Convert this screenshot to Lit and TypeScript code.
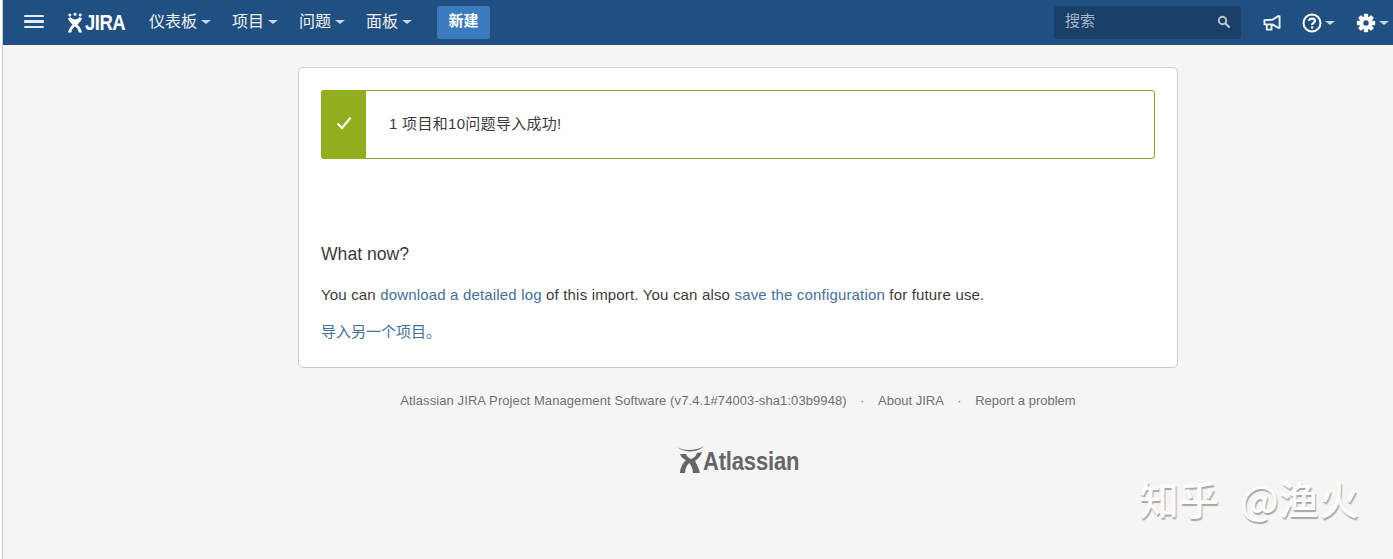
import { LitElement, html, css, svg } from "lit";
import { customElement } from "lit/decorators.js";

const caret = html`<span class="caret"></span>`;

@customElement("app-root")
export class AppRoot extends LitElement {
  static styles = css`
    :host { display: block; position: relative; width: 1393px; height: 559px; overflow: hidden; background: #fff; font-family: "Liberation Sans", "Noto Sans CJK SC", sans-serif; font-size: 14px; color: #3b3b3b; }
    .page { margin-left: 2px; height: 559px; border-left: 1px solid #ccc; background: #f5f5f5; display: flex; flex-direction: column; }
    .bar { height: 45px; flex: none; background: #205081; display: flex; align-items: center; color: #fff; position: relative; }
    .burger { margin-left: 21px; margin-top: -2px; width: 20px; height: 14px; display: flex; flex-direction: column; justify-content: space-between; }
    .burger i { display: block; height: 2.4px; background: #e4eaf1; border-radius: 1px; }
    .logo { margin-left: 23px; display: flex; align-items: center; gap: 2px; width: 59px; flex: none; }
    .logo svg { flex: none; }
    .logo b { font-size: 22px; letter-spacing: -0.6px; line-height: 24px; color: #fff; transform: scaleX(.84); transform-origin: left; }
    .nav { display: flex; margin-left: 23px; }
    .nav a { display: flex; align-items: center; color: #f0f0f0; font-size: 16px; line-height: 20px; padding-bottom: 2px; margin-right: 21px; gap: 4px; }
    .caret { width: 0; height: 0; border: 5px solid transparent; border-top: 4px solid #ccd6e2; border-bottom: 0; margin-top: 0; }
    .new { margin-left: 4px; width: 53px; height: 33px; background: #3b7cbf; border-radius: 3px; color: #fff; font-size: 15px; line-height: 20px; font-weight: bold; display: flex; align-items: center; justify-content: center; padding-bottom: 3px; box-sizing: border-box; }
    .search { margin-left: auto; width: 187px; height: 33px; background: #1a3f68; border-radius: 3px; display: flex; align-items: center; justify-content: space-between; padding: 0 11px; box-sizing: border-box; color: #a5b5c8; font-size: 15px; }
    .search span { line-height: 20px; padding-bottom: 3px; }
    .search svg { margin-bottom: 3px; }
    .tools { display: flex; align-items: center; margin-left: 22px; margin-right: 4px; }
    .tools .t { display: flex; align-items: center; gap: 3px; }
    .tools .t:nth-child(2) { margin-left: 21px; }
    .tools .t:nth-child(3) { margin-left: 21px; }
    .card { width: 880px; height: 301px; flex: none; background: #fff; border: 1px solid #ccc; border-radius: 5px; margin: 22px 0 0 295px; padding: 22px; position: relative; box-sizing: border-box; }
    .alert { height: 69px; display: flex; border: 1px solid #8a9f3c; border-radius: 3px; align-items: center; box-sizing: border-box; }
    .tick { width: 45px; height: 69px; margin: -1px 0 -1px -1px; background: #91ae1e; border-radius: 3px 0 0 3px; display: flex; align-items: center; justify-content: center; flex: none; }
    .tick svg { margin-bottom: 4px; }
    .msg { margin-left: 23px; font-size: 15px; line-height: 20px; padding-bottom: 2px; letter-spacing: .3px; }
    h2 { margin: 85px 0 0; font-size: 17.6px; font-weight: normal; line-height: 20px; }
    p { margin: 21px 0 0; line-height: 20px; font-size: 15px; letter-spacing: .17px; }
    p + p { margin-top: 17px; letter-spacing: 0; }
    a.l { color: #44709c; text-decoration: none; }
    .foot { margin: 24px 0 0 295px; width: 880px; display: flex; justify-content: center; font-size: 13px; line-height: 18px; color: #707070; }
    .foot .v { letter-spacing: .09px; }
    .foot .dot { margin: 0 13.5px; }
    .brand { margin: 36px 0 0 295px; width: 880px; display: flex; justify-content: center; }
    .brandin { display: flex; align-items: flex-end; margin-left: 1px; color: #666; }
    .brandin b { font-size: 25px; line-height: 25px; letter-spacing: -.2px; display: inline-block; width: 97px; white-space: nowrap; transform: scaleX(.88); transform-origin: left; margin-left: -2px; }
    .mark { position: absolute; left: 1139px; top: 469px; font-size: 40px; line-height: 58px; font-family: "Noto Sans CJK SC", sans-serif; font-weight: 500; color: #fbfbfb; text-shadow: 1px 2px 1px #a8a8a8; white-space: pre; word-spacing: 12px; }
  `;

  render() {
    return html`
      <div class="page">
        <header class="bar">
          <div class="burger"><i></i><i></i><i></i></div>
          <div class="logo">
            <svg width="16" height="22" viewBox="0 0 17 22">
              <g fill="#fff"><circle cx="3" cy="2.5" r="1.6"/><circle cx="8.5" cy="1.6" r="1.6"/><circle cx="14" cy="2.5" r="1.6"/>
              <path d="M1 6 L4 5 C6 8 11 8 13 5 L16 6 C15 9 13 11 11 12.5 C13 14.5 15 17 16 21 L12.5 21 C12 18 10.500 16 8.500 14.500 C6.500 16 5 18 4.500 21 L1 21 C2 17 4 14.500 6 12.500 C4 11 2 9 1 6 Z"/></g>
            </svg>
            <b>JIRA</b>
          </div>
          <nav class="nav">
            <a>仪表板${caret}</a>
            <a>项目${caret}</a>
            <a>问题${caret}</a>
            <a>面板${caret}</a>
          </nav>
          <div class="new">新建</div>
          <div class="search">
            <span>搜索</span>
            <svg width="13" height="13" viewBox="0 0 13 13"><circle cx="5.500" cy="5.500" r="3.700" fill="none" stroke="#b4c2d2" stroke-width="2"/><path d="M8.500 8.500 L12 12" stroke="#b4c2d2" stroke-width="2.400" stroke-linecap="round"/></svg>
          </div>
          <div class="tools">
            <span class="t"><svg width="18" height="18" viewBox="0 0 19 18"><path d="M1.500 6 L10 5.500 L16 1.800 L17.500 1.800 L17.500 14 L16 14 L10 10.500 L9 10.500 L9 16 L4 16 L4 10.500 L1.500 10.500 Z M4 10.500 L9 10.500" fill="none" stroke="#eef2f6" stroke-width="2" stroke-linejoin="round"/></svg></span>
            <span class="t"><svg width="20" height="20" viewBox="0 0 20 20"><circle cx="10" cy="10" r="8.500" fill="none" stroke="#fff" stroke-width="2"/><path d="M7 7.800 C7 4.800 13 4.800 13 7.800 C13 9.800 10 9.800 10 12" fill="none" stroke="#fff" stroke-width="2.200"/><rect x="9" y="13.300" width="2.200" height="2.200" fill="#fff"/></svg>${caret}</span>
            <span class="t"><svg width="20" height="20" viewBox="0 0 20 20"><g fill="#fff"><circle cx="10" cy="10" r="6.500"/>${[0, 45, 90, 135, 180, 225, 270, 315].map((a) => svg`<rect x="7.800" y="0.800" width="4.400" height="5" rx="1" transform="rotate(${a} 10 10)"/>`)}</g><circle cx="10" cy="10" r="2.700" fill="#205081"/></svg>${caret}</span>
          </div>
        </header>
        <main class="card">
          <div class="alert">
            <div class="tick"><svg width="16" height="14" viewBox="0 0 16 14"><path d="M1.500 7.500 L6 12 L14.500 1.800" fill="none" stroke="#fff" stroke-width="2.200"/></svg></div>
            <div class="msg">1 项目和10问题导入成功!</div>
          </div>
          <h2>What now?</h2>
          <p>You can <a class="l">download a detailed log</a> of this import. You can also <a class="l">save the configuration</a> for future use.</p>
          <p><a class="l">导入另一个项目。</a></p>
        </main>
        <footer class="foot">
          <span class="v">Atlassian JIRA Project Management Software (v7.4.1#74003-sha1:03b9948)</span>
          <span class="dot">·</span><span>About JIRA</span>
          <span class="dot">·</span><span>Report a problem</span>
        </footer>
        <div class="brand">
          <div class="brandin">
            <svg width="28" height="28" viewBox="0 0 28 28">
              <path d="M0 1 C6 5 20 5 27 0 C21 7 7 7 0 1 Z" fill="#666"/>
              <path d="M3 8 L9 8 C10 11 12 12 14 13 C17 12 19 10 20 7 L25 6 C24 10 21 13 18 15 C20 19 22 23 23 27 L16 27 C16 23 14 19 12 17 C9 20 8 24 8 27 L3 27 C3 22 6 17 9 14 C6 13 4 11 3 8 Z" fill="#666"/>
            </svg>
            <b>Atlassian</b>
          </div>
        </div>
      </div>
      <div class="mark">知乎 @渔火</div>
    `;
  }
}
